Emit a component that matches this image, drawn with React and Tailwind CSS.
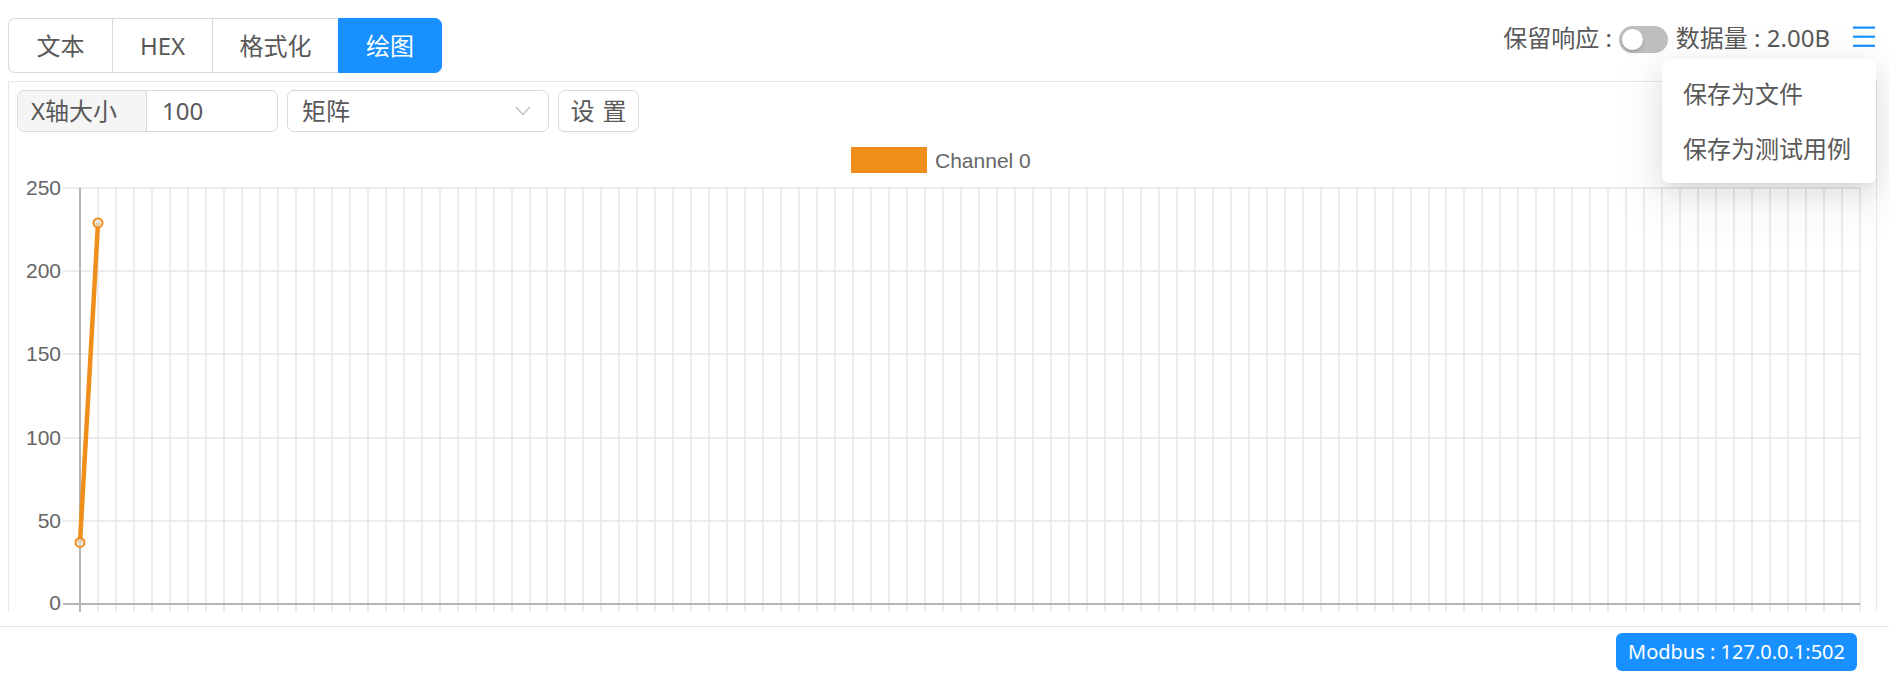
import React from "react";

const tabs = [
    { label: "文本", w: "w-[104px]" },
    { label: "HEX", w: "w-[100px]" },
    { label: "格式化", w: "w-[126px]" },
    { label: "绘图", w: "w-[104px]" },
];

function TabGroup({ active }) {
    return (
        <div className="mt-[18px] flex h-[55px]">
            {tabs.map((t, i) => {
                const isActive = t.label === active;
                const first = i === 0;
                const last = i === tabs.length - 1;
                return (
                    <div
                        key={t.label}
                        className={`${t.w} flex items-center justify-center border-y border-l text-[24px] leading-none ${first ? "rounded-l-[7px]" : ""} ${last ? "rounded-r-[7px] border-r" : ""} ${isActive ? "bg-[#1890ff] border-[#1890ff] text-white" : "bg-white border-[#d9d9d9] text-[#595959]"}`}
                    >
                        {t.label}
                    </div>
                );
            })}
        </div>
    );
}

function MenuIcon() {
    return (
        <svg width="22" height="21" viewBox="0 0 22 21" className="block">
            <rect x="0" y="0.5" width="22" height="2.2" fill="#1890ff" />
            <rect x="0" y="9.6" width="22" height="2.2" fill="#1890ff" />
            <rect x="0" y="18.7" width="22" height="2.2" fill="#1890ff" />
        </svg>
    );
}

function StatusBar() {
    return (
        <div className="relative mt-[19px] flex h-[38px] items-center text-[24px] leading-none text-[#595959]">
            <span>保留响应 :</span>
            {/* small switch, off */}
            <div className="ml-[7px] mt-[3px] flex h-[27px] w-[49px] items-center rounded-full bg-[#bfbfbf] pl-[3px]">
                <div className="h-[21px] w-[21px] rounded-full bg-white shadow-[0_2px_4px_rgba(0,35,11,0.2)]" />
            </div>
            <span className="ml-[8px]">数据量 : 2.00B</span>
            <div className="ml-[23px] -mt-[3px]">
                <MenuIcon />
            </div>

            <div className="absolute right-[-1px] top-[40px] z-10 w-[214px] rounded-[7px] bg-white py-[7px] shadow-[0_5px_10px_-6px_rgba(0,0,0,0.12),0_10px_27px_0_rgba(0,0,0,0.08),0_15px_48px_14px_rgba(0,0,0,0.05)]">
                <div className="flex h-[55px] items-center px-[21px]">保存为文件</div>
                <div className="flex h-[55px] items-center px-[21px]">保存为测试用例</div>
            </div>
        </div>
    );
}

function Toolbar() {
    return (
        <div className="flex items-center gap-[9px] px-2 pt-2 text-[24px] leading-none text-[#595959]">
            <div className="flex h-[42px] w-[261px] overflow-hidden rounded-[7px] border border-[#d9d9d9]">
                <div className="flex w-[129px] items-center border-r border-[#d9d9d9] bg-[#f5f5f5] pl-[13px]">X轴大小</div>
                <div className="flex flex-1 items-center pl-[15px]">100</div>
            </div>
            <div className="flex h-[42px] w-[262px] items-center justify-between rounded-[7px] border border-[#d9d9d9] pl-[14px] pr-[17px]">
                <span>矩阵</span>
                <svg width="16" height="10" viewBox="0 0 16 10">
                    <path d="M1 1 L8 8.5 L15 1" fill="none" stroke="#bfbfbf" strokeWidth="1.4" />
                </svg>
            </div>
            <button className="flex h-[42px] w-[81px] items-center justify-center rounded-[7px] border border-[#d9d9d9] bg-white shadow-[0_2px_0_rgba(0,0,0,0.015)]">
                <span className="mr-[-0.34em] tracking-[0.34em]">设置</span>
            </button>
        </div>
    );
}

function Chart() {
    const x0 = 80;
    const step = 17.98;
    const yZero = 604;
    const perUnit = 83.2 / 50;
    const xs = Array.from({ length: 100 }, (_, i) => Math.round(x0 + i * step));
    const yOf = (v) => yZero - v * perUnit;
    const ticks = [0, 50, 100, 150, 200, 250];
    const data = [37, 229];
    const pts = data.map((v, i) => [xs[i], yOf(v)]);
    const xEnd = xs[xs.length - 1];
    const chartFont = "'Liberation Sans', Arial, sans-serif";

    return (
        <svg width="1867" height="490" viewBox="9 132 1867 490" className="block">
            {/* vertical grid */}
            {xs.map((x, i) =>
                i === 0 ? null : (
                    <line key={"v" + i} x1={x} x2={x} y1={188} y2={622} stroke="#e6e6e6" strokeWidth="1.5" />
                )
            )}
            {/* horizontal grid */}
            {ticks.map((t) =>
                t === 0 ? null : (
                    <line key={"h" + t} x1={63} x2={xEnd} y1={Math.round(yOf(t))} y2={Math.round(yOf(t))} stroke="#e6e6e6" strokeWidth="1.5" />
                )
            )}
            {/* axes */}
            <line x1={xs[0]} x2={xs[0]} y1={188} y2={622} stroke="#b5b5b5" strokeWidth="2" />
            <line x1={63} x2={xEnd} y1={yZero} y2={yZero} stroke="#b5b5b5" strokeWidth="2" />

            {ticks.map((t) => (
                <text
                    key={"l" + t}
                    x={61}
                    y={yOf(t) - (t === 0 ? 2 : 0.5)}
                    textAnchor="end"
                    dominantBaseline="central"
                    fontSize="21"
                    fill="#666"
                    fontFamily={chartFont}
                >
                    {t}
                </text>
            ))}

            {/* legend */}
            <rect x="851" y="147" width="76" height="26" fill="#ef8e1b" />
            <text x="935" y="160" dominantBaseline="central" fontSize="21" fill="#666" fontFamily={chartFont}>
                Channel 0
            </text>

            {/* data */}
            <polyline points={pts.map((p) => p.join(",")).join(" ")} fill="none" stroke="#ef8e1b" strokeWidth="4.5" />
            {pts.map(([x, y], i) => (
                <circle key={"p" + i} cx={x} cy={y} r="4.5" fill="#e4e4e4" fillOpacity="0.7" stroke="#ef8e1b" strokeWidth="2" />
            ))}
        </svg>
    );
}

export default function App() {
    return (
        <div className="h-[674px] w-full overflow-hidden bg-white font-['Noto_Sans','Noto_Sans_CJK_SC',sans-serif]">
            <div className="h-[612px] overflow-hidden">
                <div className="flex items-start justify-between pl-2 pr-[14px]">
                    <TabGroup active="绘图" />
                    <StatusBar />
                </div>
                <div className="ml-2 mr-3 mt-2 border border-[#e8e8e8]">
                    <Toolbar />
                    <Chart />
                </div>
            </div>
            <div className="mt-[14px] flex h-[48px] items-start justify-end border-t border-[#e3e3ea] pr-[32px] pt-[6px]">
                <div className="flex h-[38px] w-[241px] items-center justify-center rounded-[6px] bg-[#1890ff] text-[20px] leading-none text-white">
                    Modbus : 127.0.0.1:502
                </div>
            </div>
        </div>
    );
}
